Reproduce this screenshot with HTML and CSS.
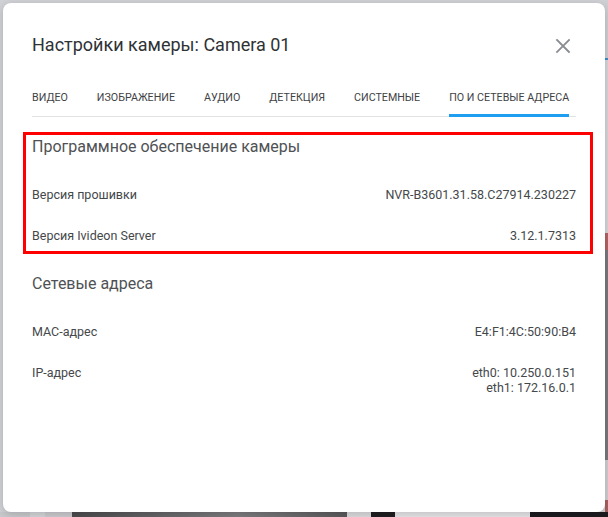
FILE: index.html
```html
<!DOCTYPE html>
<html lang="ru">
<head>
<meta charset="utf-8">
<title>Настройки камеры</title>
<link rel="stylesheet" href="styles.css">
</head>
<body>
<div class="app">
  <div class="app-main">
    <div class="app-area"></div>
    <div class="app-edge">
      <div class="edge-seg edge-gray1"></div>
      <div class="edge-seg edge-blue"></div>
      <div class="edge-seg edge-gray2"></div>
      <div class="edge-seg edge-red"></div>
      <div class="edge-seg edge-dark"></div>
      <div class="edge-seg edge-gray3"></div>
      <div class="edge-seg edge-red2"></div>
    </div>
  </div>
  <div class="app-bottom">
    <div class="seg seg-a"></div>
    <div class="seg seg-b"></div>
    <div class="seg seg-c"></div>
    <div class="seg seg-d"></div>
    <div class="seg seg-e"></div>
    <div class="seg seg-f"></div>
    <div class="seg seg-g"></div>
    <div class="seg seg-h"></div>
  </div>
</div>

<div class="dialog">
  <div class="dialog-header">
    <h1 class="dialog-title">Настройки камеры: Camera 01</h1>
    <button class="close-btn" type="button" aria-label="Закрыть">
      <svg width="24" height="24" viewBox="0 0 24 24"><path d="M6 6 L18 18 M18 6 L6 18" stroke="#8a8d91" stroke-width="1.8" fill="none" stroke-linecap="square"/></svg>
    </button>
  </div>
  <div class="tabs">
    <div class="tab">Видео</div>
    <div class="tab">Изображение</div>
    <div class="tab">Аудио</div>
    <div class="tab">Детекция</div>
    <div class="tab">Системные</div>
    <div class="tab tab-active">ПО и сетевые адреса</div>
  </div>

  <div class="section section-first">
    <h2 class="section-title">Программное обеспечение камеры</h2>
    <div class="row">
      <div class="row-label">Версия прошивки</div>
      <div class="row-value">NVR-B3601.31.58.C27914.230227</div>
    </div>
    <div class="row">
      <div class="row-label">Версия Ivideon Server</div>
      <div class="row-value">3.12.1.7313</div>
    </div>
  </div>

  <div class="section section-second">
    <h2 class="section-title">Сетевые адреса</h2>
    <div class="row">
      <div class="row-label">MAC-адрес</div>
      <div class="row-value">E4:F1:4C:50:90:B4</div>
    </div>
    <div class="row">
      <div class="row-label">IP-адрес</div>
      <div class="row-value">eth0: 10.250.0.151<br>eth1: 172.16.0.1</div>
    </div>
  </div>

  <div class="highlight"></div>
</div>
</body>
</html>
```

FILE: styles.css
```css
* { box-sizing: border-box; }

html, body {
  margin: 0;
  padding: 0;
  width: 608px;
  height: 517px;
  overflow: hidden;
}

body {
  font-family: Roboto, "Noto Sans", "Liberation Sans", sans-serif;
  background: #d1d2d6;
  position: relative;
}

/* background app (dimmed by overlay) */
.app {
  display: flex;
  flex-direction: column;
  height: 517px;
}
.app-main {
  flex: 1;
  display: flex;
}
.app-area {
  flex: 1;
  background: #d1d2d6;
}
.app-edge {
  width: 3px;
  display: flex;
  flex-direction: column;
}
.edge-seg { width: 3px; }
.edge-gray1 { height: 58px; background: #cfd0d4; }
.edge-blue  { height: 2px;  background: #3a8fd0; }
.edge-gray2 { height: 173px; background: #d6d7db; }
.edge-red   { height: 17px; background: #b46464; }
.edge-dark  { height: 210px; background: #7a7a7e; }
.edge-gray3 { height: 40px; background: #cfcfd3; }
.edge-red2  { flex: 1; background: #a86060; }

.app-bottom {
  height: 5px;
  display: flex;
}
.seg { height: 5px; }
.seg-a { width: 30px; background: #c8c9cd; }
.seg-b { width: 15px; background: #d4d5d9; }
.seg-c { width: 27px; background: #cbcbcf; }
.seg-d { width: 275px; background: linear-gradient(90deg, #4b4b4d, #7d7d80 60%, #5a5a5c); }
.seg-e { width: 24px; background: #dcdcdf; }
.seg-f { width: 24px; background: #1f1f23; }
.seg-g { width: 135px; background: #e6e6e9; }
.seg-h { flex: 1; background: #1c1c20; }

/* dialog */
.dialog {
  position: absolute;
  left: 3px;
  top: 3px;
  width: 602px;
  height: 509px;
  background: #ffffff;
  border-radius: 8px;
  box-shadow: 0 2px 10px rgba(0, 0, 0, 0.18);
  padding: 30px 29px 0 29px;
}

.dialog-header {
  display: flex;
  align-items: flex-start;
  justify-content: space-between;
  height: 24px;
}

.dialog-title {
  margin: 0;
  font-size: 18px;
  line-height: 24px;
  font-weight: 400;
  color: #2f3235;
}

.close-btn {
  width: 24px;
  height: 24px;
  padding: 0;
  margin: 1px 1px 0 0;
  border: 0;
  background: transparent;
  display: flex;
}

.tabs {
  margin-top: 34px;
  display: flex;
  gap: 29px;
  border-bottom: 1px solid #e1e2e4;
}

.tab {
  font-size: 10.7px;
  line-height: 13px;
  text-transform: uppercase;
  color: #3f4245;
  padding-bottom: 10px;
  border-bottom: 3px solid transparent;
  margin-bottom: -1px;
  white-space: nowrap;
}

.tab-active {
  border-bottom-color: #1e9ef0;
}

.section-first { margin-top: 18px; }
.section-second { margin-top: 16px; }

.section-title {
  margin: 0 0 15px 0;
  font-size: 16px;
  line-height: 24px;
  font-weight: 400;
  color: #4f5255;
}

.row {
  display: flex;
  justify-content: space-between;
  align-items: flex-start;
  padding: 13px 0;
  font-size: 12.5px;
  line-height: 15px;
  color: #45484b;
}

.row-value {
  text-align: right;
}

.highlight {
  position: absolute;
  left: 20px;
  top: 129px;
  width: 570px;
  height: 122px;
  border: 3px solid #ff0000;
  pointer-events: none;
}
```
